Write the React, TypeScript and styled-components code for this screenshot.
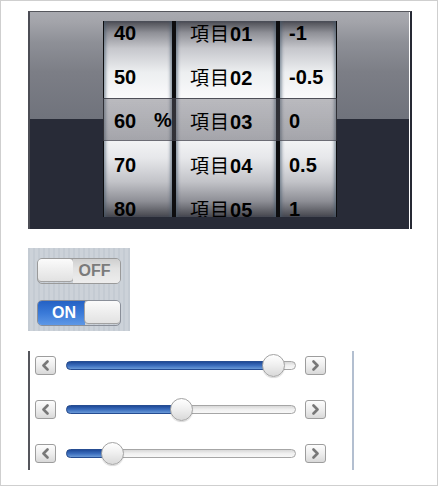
import React from "react";
import styled, { createGlobalStyle } from "styled-components";

const Global = createGlobalStyle`
  html, body { margin: 0; padding: 0; background: #fff; }
  body { font-family: "Liberation Sans", Arial, sans-serif; }
`;

const Page = styled.div`
  width: 438px;
  height: 486px;
  box-sizing: border-box;
  border: 1px solid #cfcfcf;
  padding: 10px 0 0 27px;
  display: flex;
  flex-direction: column;
  align-items: flex-start;
`;

const PickerPanel = styled.div`
  width: 384px;
  height: 218px;
  box-sizing: border-box;
  border-left: 2px solid #4c4d55;
  border-top: 1px solid #55565c;
  border-right: 2px solid #262934;
  box-shadow: inset -1px 0 0 #ffffff;
  background:
    linear-gradient(to bottom, #a9aab0 0px, #a3a4aa 10px, #8e9097 30px, #7c7e86 60px, #70737c 106px) top / 100% 107px no-repeat,
    #282b37;
  display: flex;
  justify-content: center;
  padding-top: 9px;
`;

const Wheels = styled.div`
  position: relative;
  height: 196px;
  display: flex;
  gap: 4px;
  padding: 0 1px;
  background: #0d0d0f;
  overflow: hidden;
`;

const Wheel = styled.div<{ $w: number; $pad: number }>`
  width: ${(p) => p.$w}px;
  height: 196px;
  padding-left: ${(p) => p.$pad}px;
  box-sizing: border-box;
  background: linear-gradient(
    to bottom,
    #4a4b52 0%,
    #8f9097 6%,
    #c6c7cc 14%,
    #eceef0 26%,
    #fbfbfc 40%,
    #f7f8f9 58%,
    #e6e7ea 70%,
    #c2c3c8 82%,
    #8d8e95 92%,
    #45464d 100%
  );
  box-shadow: inset 3px 0 3px -1px rgba(70, 90, 110, 0.55), inset -3px 0 3px -1px rgba(70, 90, 110, 0.55);
  display: flex;
  flex-direction: column;
`;

const Rows = styled.div`
  position: relative;
  z-index: 2;
  margin-top: -10px;
  display: flex;
  flex-direction: column;
`;

const Cell = styled.div`
  height: 44px;
  line-height: 44px;
  font-size: 20px;
  font-weight: bold;
  color: #000;
  white-space: nowrap;
`;

const Cjk = styled.span`
  font-family: "Noto Sans CJK JP", sans-serif;
  font-weight: normal;
  font-size: 19px;
  letter-spacing: 1px;
`;

const Band = styled.div`
  position: absolute;
  z-index: 1;
  left: 0;
  right: 0;
  top: 77px;
  height: 43px;
  box-sizing: border-box;
  border-top: 1px solid rgba(50, 50, 60, 0.75);
  border-bottom: 1px solid rgba(60, 60, 70, 0.6);
  background: linear-gradient(to bottom, rgba(95, 95, 105, 0.42), rgba(85, 85, 95, 0.5));
  padding-left: 51px;
  display: flex;
  align-items: center;
`;

const Unit = styled.span`
  position: relative;
  z-index: 3;
  font-size: 20px;
  font-weight: bold;
  color: #000;
  line-height: 42px;
`;

const SwitchPanel = styled.div`
  margin-top: 19px;
  width: 102px;
  height: 83px;
  box-sizing: border-box;
  padding: 10px 0 0 9px;
  background: repeating-linear-gradient(90deg, #c4cbd3 0px, #c4cbd3 2px, #ccd2d9 2px, #ccd2d9 5px);
  display: flex;
  flex-direction: column;
  gap: 16px;
`;

const Switch = styled.div<{ $on: boolean }>`
  width: 84px;
  height: 26px;
  box-sizing: border-box;
  border: 1px solid ${(p) => (p.$on ? "#8a8f99" : "#9a9a9a")};
  border-radius: 5px;
  overflow: hidden;
  display: flex;
  flex-direction: ${(p) => (p.$on ? "row-reverse" : "row")};
`;

const Knob = styled.div`
  width: 37px;
  height: 100%;
  box-sizing: border-box;
  border-radius: 4px;
  border: 1px solid #a2a2a2;
  margin: -1px;
  background: linear-gradient(to bottom, #fbfbfb 0%, #eeeeee 50%, #e2e2e2 100%);
  flex: none;
`;

const Face = styled.div<{ $on: boolean }>`
  flex: 1;
  display: flex;
  align-items: center;
  justify-content: center;
  padding-left: ${(p) => (p.$on ? "5px" : "0")};
  padding-right: ${(p) => (p.$on ? "0" : "4px")};
  font-size: 16px;
  font-weight: bold;
  color: ${(p) => (p.$on ? "#ffffff" : "#7b7b7b")};
  background: ${(p) =>
    p.$on
      ? "linear-gradient(to bottom, #2461c4 0%, #3a7ad8 50%, #5e98e6 100%)"
      : "linear-gradient(to bottom, #cfcfcf 0%, #e2e2e2 40%, #ededed 100%)"};
`;

const SliderBox = styled.div`
  margin-top: 20px;
  width: 326px;
  box-sizing: border-box;
  border-left: 2px solid #55565c;
  border-right: 2px solid #b3bfd0;
  padding: 3px 0 6px 5px;
  display: flex;
  flex-direction: column;
  gap: 22px;
`;

const SliderRow = styled.div`
  height: 22px;
  display: flex;
  align-items: center;
`;

const StepButton = styled.div`
  width: 21px;
  height: 19px;
  box-sizing: border-box;
  border: 1px solid #9d9d9d;
  border-radius: 3px;
  background: linear-gradient(to bottom, #fdfdfd 0%, #ececec 55%, #d9d9d9 100%);
  display: flex;
  align-items: center;
  justify-content: center;
  flex: none;
`;

const Track = styled.div`
  position: relative;
  width: 230px;
  height: 9px;
  margin: 0 9px 0 10px;
  box-sizing: border-box;
  border: 1px solid #a6a6a6;
  border-radius: 5px;
  background: linear-gradient(to bottom, #d8d8d8 0%, #f0f0f0 50%, #f8f8f8 100%);
`;

const Fill = styled.div`
  position: absolute;
  left: -1px;
  top: -1px;
  bottom: -1px;
  box-sizing: border-box;
  border: 1px solid #264d92;
  border-radius: 5px 0 0 5px;
  background: linear-gradient(to bottom, #1f4a98 0%, #3a6cbc 50%, #6a9ad8 100%);
`;

const Thumb = styled.div`
  position: absolute;
  top: 50%;
  width: 23px;
  height: 23px;
  margin: -11.5px 0 0 -11.5px;
  box-sizing: border-box;
  border: 1px solid #a3a3a3;
  border-radius: 50%;
  background: linear-gradient(to bottom, #ffffff 0%, #f0f0f0 45%, #d9d9d9 100%);
  box-shadow: 0 1px 1px rgba(0, 0, 0, 0.15);
`;

const Chevron = ({ dir }: { dir: "left" | "right" }) => (
  <svg width="9" height="11" viewBox="0 0 9 11">
    <path
      d={dir === "left" ? "M6.5 1.5 L2.5 5.5 L6.5 9.5" : "M2.5 1.5 L6.5 5.5 L2.5 9.5"}
      fill="none"
      stroke="#787878"
      strokeWidth="2.6"
      strokeLinecap="round"
      strokeLinejoin="round"
    />
  </svg>
);

const col1 = ["40", "50", "60", "70", "80"];
const col2 = ["01", "02", "03", "04", "05"];
const col3 = ["-1", "-0.5", "0", "0.5", "1"];
const sliders = [206, 114, 45];

export default function App() {
  return (
    <>
      <Global />
      <Page>
        <PickerPanel>
          <Wheels>
            <Wheel $w={68} $pad={10}>
              <Rows>
                {col1.map((v) => (
                  <Cell key={v}>{v}</Cell>
                ))}
              </Rows>
            </Wheel>
            <Wheel $w={100} $pad={14}>
              <Rows>
                {col2.map((v) => (
                  <Cell key={v}>
                    <Cjk>項目</Cjk>
                    {v}
                  </Cell>
                ))}
              </Rows>
            </Wheel>
            <Wheel $w={56} $pad={9}>
              <Rows>
                {col3.map((v) => (
                  <Cell key={v}>{v}</Cell>
                ))}
              </Rows>
            </Wheel>
            <Band>
              <Unit>%</Unit>
            </Band>
          </Wheels>
        </PickerPanel>

        <SwitchPanel>
          <Switch $on={false}>
            <Knob />
            <Face $on={false}>OFF</Face>
          </Switch>
          <Switch $on={true}>
            <Knob />
            <Face $on={true}>ON</Face>
          </Switch>
        </SwitchPanel>

        <SliderBox>
          {sliders.map((pos, i) => (
            <SliderRow key={i}>
              <StepButton>
                <Chevron dir="left" />
              </StepButton>
              <Track>
                <Fill style={{ width: pos + 1 }} />
                <Thumb style={{ left: pos }} />
              </Track>
              <StepButton>
                <Chevron dir="right" />
              </StepButton>
            </SliderRow>
          ))}
        </SliderBox>
      </Page>
    </>
  );
}
